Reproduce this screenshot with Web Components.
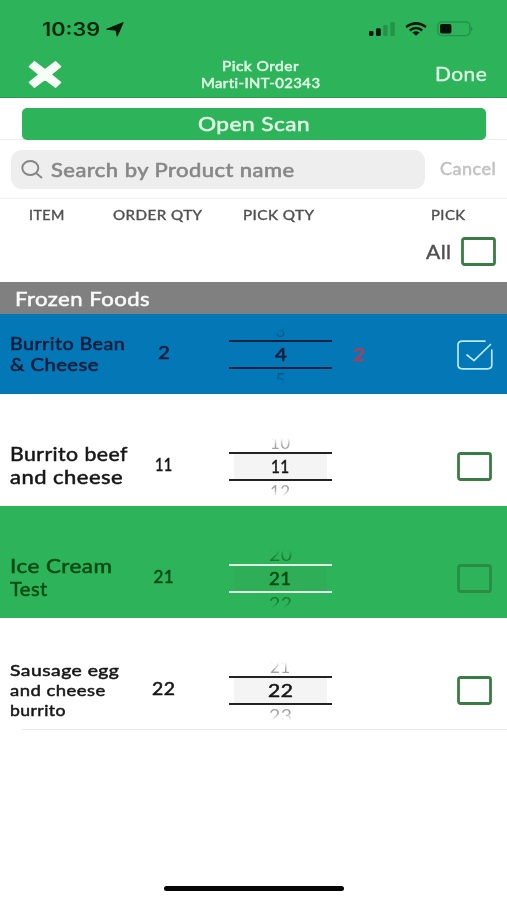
<!DOCTYPE html>
<html lang="en">
<head>
<meta charset="utf-8">
<title>Pick Order</title>
<style>
    html, body { margin: 0; height: 100%; background: #fff; }
    body { font-family: Lato, "Open Sans", sans-serif; color: #222; overflow: hidden; }
</style>
</head>
<body>

<pick-app></pick-app>

<script>
// one line of text, stretched to the width given in "w"
class FitText extends HTMLElement {
    constructor() {
        super();
        this.attachShadow({ mode: "open" });
        this.shadowRoot.innerHTML = `
            <style>
                :host { display: block; white-space: nowrap; letter-spacing: .4px; -webkit-text-stroke: var(--stroke, .5px) currentColor; }
                span { display: inline-block; transform-origin: 0 50%; }
            </style>
            <span><slot></slot></span>`;
    }
    connectedCallback() {
        const w = parseFloat(this.getAttribute("w"));
        const span = this.shadowRoot.querySelector("span");
        this.style.width = w + "px";
        span.style.transform = `scaleX(${w / span.offsetWidth})`;
    }
}

class StatusBar extends HTMLElement {
    constructor() {
        super();
        this.attachShadow({ mode: "open" });
        this.shadowRoot.innerHTML = `
            <style>
                :host { display: flex; align-items: center; height: 49px; padding: 9px 33px 0 42px; box-sizing: border-box; color: #06280f; --stroke: 0; }
                fit-text { margin-top: 1px; font: 600 18px/22px Inter, sans-serif; letter-spacing: 0; }
                svg { display: block; }
                .arrow { margin-left: 6px; }
                .right { display: flex; align-items: center; margin-left: auto; gap: 10px; }
            </style>
            <fit-text w="58">10:39</fit-text>
            <svg class="arrow" width="18" height="15" viewBox="0 0 18 15"><path d="M17.2.6 11.2 14.2 10 8.2.6 7.3Z" fill="#06180b" stroke="#06180b" stroke-linejoin="round"/></svg>
            <div class="right">
                <svg width="26" height="14" viewBox="0 0 26 14">
                    <rect x="0" y="9" width="4.4" height="5" rx="1.3" fill="#06180b"/>
                    <rect x="7" y="6.3" width="4.8" height="7.7" rx="1.3" fill="#06180b"/>
                    <rect x="14.2" y="3" width="4.4" height="11" rx="1.2" fill="#259249"/>
                    <rect x="21.4" y="0" width="4.4" height="14" rx="1.2" fill="#259249"/>
                </svg>
                <svg width="22" height="14" viewBox="0 0 22 14" fill="none" stroke="#06180b" stroke-width="2.5">
                    <path d="M1 5Q11-2.2 21 5"/>
                    <path d="M4.7 8.4Q11 3.6 17.3 8.4"/>
                    <path d="M7.4 10.6Q11 8 14.6 10.6L11 13.8Z" fill="#06180b" stroke="none"/>
                </svg>
                <svg width="37" height="16" viewBox="0 0 37 16">
                    <rect x=".9" y="1" width="32" height="13.6" rx="4" fill="none" stroke="#239248" stroke-width="1.4"/>
                    <rect x="3" y="3" width="11.4" height="9.6" rx="1.8" fill="#04120a"/>
                    <path d="M34.3 5.4Q36.6 7.8 34.3 10.2Z" fill="#1b7a3a"/>
                </svg>
            </div>`;
    }
}

class NavBar extends HTMLElement {
    constructor() {
        super();
        this.attachShadow({ mode: "open" });
        this.shadowRoot.innerHTML = `
            <style>
                :host { display: grid; grid-template-columns: 1fr 118px 1fr; height: 49px; box-sizing: border-box; padding: 0 20px 0 28px; border-bottom: 1px solid #279c4b; color: #e2fbe6; }
                svg { display: block; margin-top: 11px; }
                .title { display: flex; flex-direction: column; align-items: center; margin: 9px 0 0 5px; font: 400 13.5px/16.5px Lato, sans-serif; }
                .done { justify-self: end; margin-top: 13px; font: 400 18.5px/25px Lato, sans-serif; --stroke: .3px; }
            </style>
            <svg width="34" height="29" viewBox="0 0 34 29"><path d="M6.5 1.8 17 9.8 27.5 1.8 32.5 6.6 22.6 14.5 32.5 22.4 27.5 27.2 17 19.2 6.5 27.2 1.5 22.4 11.4 14.5 1.5 6.6Z" fill="#f5fff5" stroke="#f5fff5" stroke-width="1.6" stroke-linejoin="round"/></svg>
            <div class="title">
                <fit-text w="77">Pick Order</fit-text>
                <fit-text w="119">Marti-INT-02343</fit-text>
            </div>
            <fit-text class="done" w="52">Done</fit-text>`;
    }
}

class ScanButton extends HTMLElement {
    constructor() {
        super();
        this.attachShadow({ mode: "open" });
        this.shadowRoot.innerHTML = `
            <style>
                :host { display: block; height: 42px; box-sizing: border-box; padding: 10px 21px 0 22px; border-bottom: 1px solid #eee; }
                button { display: flex; align-items: center; width: 100%; height: 32px; padding: 0 0 1px 176px; border: 0; border-radius: 5px; background: #2db45a; color: #e2fbe6; font: 400 19px/24px Lato, sans-serif; text-align: left; }
            </style>
            <button><fit-text w="112"><slot></slot></fit-text></button>`;
    }
}

class SearchBar extends HTMLElement {
    constructor() {
        super();
        this.attachShadow({ mode: "open" });
        this.shadowRoot.innerHTML = `
            <style>
                :host { display: flex; align-items: center; height: 59px; box-sizing: border-box; padding: 0 11px; border-bottom: 1px solid #efefef; }
                .field { display: flex; align-items: center; width: 414px; height: 39px; box-sizing: border-box; padding: 1px 0 0 10px; border-radius: 11px; background: #eee; color: #878787; font: 400 19.5px/24px Lato, sans-serif; --stroke: .6px; }
                svg { display: block; margin-right: 8px; }
                .cancel { margin: 0 0 0 15px; color: #c2c2c2; font: 400 16.5px/22px Lato, sans-serif; }
            </style>
            <div class="field">
                <svg width="22" height="19" viewBox="0 0 22 19" fill="none" stroke="#858585" stroke-width="1.9"><ellipse cx="9.3" cy="8" rx="8" ry="7"/><path d="M15 13 21 18"/></svg>
                <fit-text w="244">Search by Product name</fit-text>
            </div>
            <fit-text class="cancel" w="56">Cancel</fit-text>`;
    }
}

class CheckBox extends HTMLElement {
    constructor() {
        super();
        this.attachShadow({ mode: "open" });
        this.shadowRoot.innerHTML = `
            <style>
                :host { display: block; width: 35px; height: 29px; color: #3a7d44; }
                :host([muted]) { color: #2b8c46; }
                svg { display: block; }
                .on { display: none; }
                :host([checked]) .on { display: block; }
                :host([checked]) .off { display: none; }
            </style>
            <svg class="off" width="35" height="29" viewBox="0 0 35 29"><rect x="1.5" y="1.5" width="32" height="26" rx="2" fill="none" stroke="currentColor" stroke-width="2.8"/></svg>
            <svg class="on" width="37" height="30" viewBox="0 0 37 30" fill="none" stroke="#b9e9fa" stroke-width="1.7" stroke-linecap="round" stroke-linejoin="round">
                <path d="M28 1.2H5.3Q1 1.2 1 5V24.8Q1 28.8 5.3 28.8H30.5Q34.8 28.8 34.8 24.8V10"/>
                <path d="M10 15 17 20.7 33.5 4.5"/>
            </svg>`;
    }
}

class ListHead extends HTMLElement {
    constructor() {
        super();
        this.attachShadow({ mode: "open" });
        this.shadowRoot.innerHTML = `
            <style>
                :host { display: block; height: 83px; box-sizing: border-box; padding-top: 7px; color: #505050; }
                .cols { display: grid; grid-template-columns: 84px 130px 188px auto; padding-left: 29px; font: 400 14px/18px Lato, sans-serif; --stroke: .4px; }
                .all { display: flex; align-items: center; justify-content: flex-end; gap: 9px; padding-right: 11px; margin-top: 13px; font: 400 19.5px/26px Lato, sans-serif; --stroke: .4px; }
            </style>
            <div class="cols">
                <fit-text w="36">ITEM</fit-text>
                <fit-text w="89">ORDER QTY</fit-text>
                <fit-text w="72">PICK QTY</fit-text>
                <fit-text w="35">PICK</fit-text>
            </div>
            <div class="all"><fit-text w="26">All</fit-text><check-box></check-box></div>`;
    }
}

class SectionTitle extends HTMLElement {
    constructor() {
        super();
        this.attachShadow({ mode: "open" });
        this.shadowRoot.innerHTML = `
            <style>
                :host { display: flex; align-items: center; height: 32px; box-sizing: border-box; padding: 1px 0 0 15px; background: #808080; color: #fafafa; font: 400 19px/24px Lato, sans-serif; }
            </style>
            <fit-text w="135"><slot></slot></fit-text>`;
    }
}

// wheel: current value between two bars, neighbours fading out above and below
class QtyPicker extends HTMLElement {
    constructor() {
        super();
        this.attachShadow({ mode: "open" });
        const value = Number(this.getAttribute("value"));
        const widths = this.getAttribute("widths").split(" ");
        this.shadowRoot.innerHTML = `
            <style>
                :host { display: grid; grid-template-rows: 20px 29px 20px; width: 103px; color: var(--ink, #222); font: 400 17px/20px Lato, sans-serif; }
                .near { display: flex; justify-content: center; opacity: var(--near, .4); --stroke: 0; }
                .prev { margin: 1px 0 -1px; -webkit-mask-image: linear-gradient(transparent 25%, #000 65%); }
                .next { margin: 1px 0 -1px; -webkit-mask-image: linear-gradient(#000 35%, transparent 72%); }
                .now { display: flex; align-items: center; justify-content: center; border: solid var(--bar, #222); border-width: 2px 0; background: linear-gradient(var(--pill, #f4f4f4), var(--pill, #f4f4f4)) center / 93px 100% no-repeat; }
            </style>
            <div class="near prev"><fit-text w="${widths[0]}">${value - 1}</fit-text></div>
            <div class="now"><fit-text w="${widths[1]}">${value}</fit-text></div>
            <div class="near next"><fit-text w="${widths[2]}">${value + 1}</fit-text></div>`;
    }
}

class PickRow extends HTMLElement {
    constructor() {
        super();
        this.attachShadow({ mode: "open" });
        this.shadowRoot.innerHTML = `
            <style>
                :host { display: grid; grid-template-columns: 126px 56px 37px 103px 53px 1fr; align-items: center; height: 112px; box-sizing: border-box; padding: 33px 15px 0 10px; --ink: #161616; color: var(--ink); font: 400 18.5px/23.5px Lato, sans-serif; }
                :host([tone=blue]) { height: 80px; padding-top: 1px; background: #0478b6; --ink: #081f3c; --bar: #062342; --pill: transparent; --near: .35; font-size: 17.5px; line-height: 21.5px; --stroke: .6px; }
                :host([tone=green]) { background: #2db45a; --ink: #074a12; --bar: #e0fbe4; --pill: #2fae58; --near: .55; }
                :host([small]) { font-size: 16px; line-height: 19.7px; }
                .name { margin-top: -1px; }
                ::slotted([slot=order]) { justify-self: center; margin-top: -3px; font-size: 17px; line-height: 20px; }
                ::slotted([slot=picker]) { grid-column: 4; }
                ::slotted([slot=diff]) { grid-column: 5; justify-self: center; color: #b93a54; font-size: 17px; }
                ::slotted([slot=box]) { grid-column: 6; justify-self: end; }
            </style>
            <div class="name"><slot></slot></div>
            <slot name="order"></slot>
            <slot name="picker"></slot>
            <slot name="diff"></slot>
            <slot name="box"></slot>`;
    }
}

class PickApp extends HTMLElement {
    constructor() {
        super();
        this.attachShadow({ mode: "open" });
        this.shadowRoot.innerHTML = `
            <style>
                :host { display: flex; flex-direction: column; width: 507px; height: 900px; background: #fff; }
                header { background: #2db45a; }
                .rule { height: 1px; margin: -1px 0 0 22px; background: #e9e9e9; }
                .home { width: 180px; height: 5px; margin: auto auto 9px 164px; border-radius: 3px; background: #050505; }
            </style>
            <header>
                <status-bar></status-bar>
                <nav-bar></nav-bar>
            </header>
            <scan-button>Open Scan</scan-button>
            <search-bar></search-bar>
            <list-head></list-head>
            <section-title>Frozen Foods</section-title>
            <pick-row tone="blue">
                <fit-text w="115">Burrito Bean</fit-text>
                <fit-text w="89">&amp; Cheese</fit-text>
                <fit-text slot="order" w="12">2</fit-text>
                <qty-picker slot="picker" value="4" widths="10 12 10"></qty-picker>
                <fit-text slot="diff" w="12">2</fit-text>
                <check-box slot="box" checked></check-box>
            </pick-row>
            <pick-row>
                <fit-text w="118">Burrito beef</fit-text>
                <fit-text w="113">and cheese</fit-text>
                <fit-text slot="order" w="18">11</fit-text>
                <qty-picker slot="picker" value="11" widths="21 19 21"></qty-picker>
                <check-box slot="box"></check-box>
            </pick-row>
            <pick-row tone="green">
                <fit-text w="103">Ice Cream</fit-text>
                <fit-text w="38">Test</fit-text>
                <fit-text slot="order" w="21">21</fit-text>
                <qty-picker slot="picker" value="21" widths="24 23 24"></qty-picker>
                <check-box slot="box" muted></check-box>
            </pick-row>
            <pick-row small>
                <fit-text w="110">Sausage egg</fit-text>
                <fit-text w="96">and cheese</fit-text>
                <fit-text w="56">burrito</fit-text>
                <fit-text slot="order" w="24">22</fit-text>
                <qty-picker slot="picker" value="22" widths="21 26 24"></qty-picker>
                <check-box slot="box"></check-box>
            </pick-row>
            <div class="rule"></div>
            <div class="home"></div>`;
    }
}

customElements.define("fit-text", FitText);
customElements.define("status-bar", StatusBar);
customElements.define("nav-bar", NavBar);
customElements.define("scan-button", ScanButton);
customElements.define("search-bar", SearchBar);
customElements.define("check-box", CheckBox);
customElements.define("list-head", ListHead);
customElements.define("section-title", SectionTitle);
customElements.define("qty-picker", QtyPicker);
customElements.define("pick-row", PickRow);
customElements.define("pick-app", PickApp);
</script>
</body>
</html>
